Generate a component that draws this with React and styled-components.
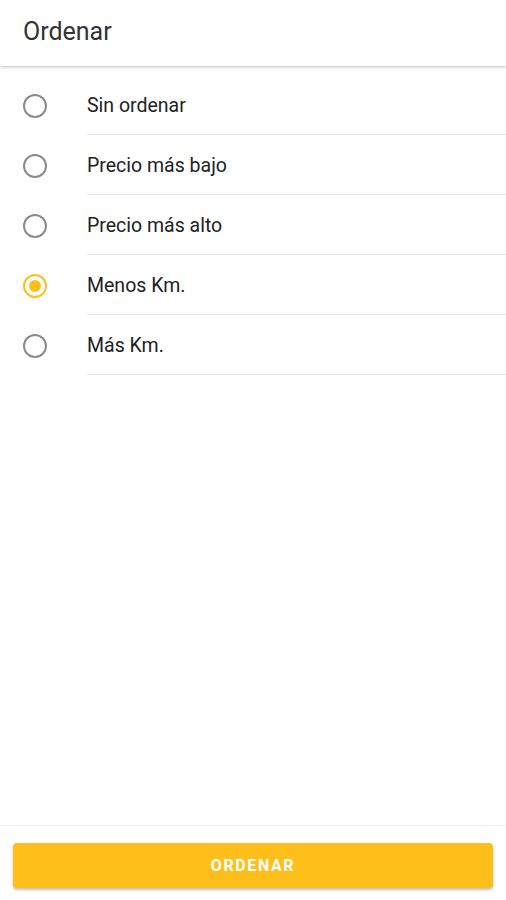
import React, { useState } from 'react';
import styled, { createGlobalStyle } from 'styled-components';

const GlobalStyle = createGlobalStyle`
  html, body {
    margin: 0;
    padding: 0;
    background: #ffffff;
    font-family: Roboto, "Liberation Sans", sans-serif;
  }
`;

const Screen = styled.div`
  display: flex;
  flex-direction: column;
  height: 900px;
  background: #fff;
`;

const Header = styled.header`
  height: 66px;
  display: flex;
  align-items: center;
  padding: 0 23px;
  box-shadow: 0 1px 3px rgba(0, 0, 0, 0.25);
  position: relative;
  z-index: 1;
`;

const Title = styled.h1`
  margin: 0;
  margin-top: -4px;
  font-size: 25px;
  font-weight: 400;
  color: #333;
`;

const List = styled.ul`
  list-style: none;
  margin: 0;
  padding: 9px 0 0;
  flex: 1;
`;

const Row = styled.li`
  display: flex;
  align-items: center;
  height: 60px;
  cursor: pointer;
`;

const RadioCell = styled.div`
  width: 87px;
  display: flex;
  padding-left: 23px;
  padding-top: 1px;
  box-sizing: border-box;
`;

const Radio = styled.span`
  width: 24px;
  height: 24px;
  box-sizing: border-box;
  border-radius: 50%;
  border: 2px solid ${(p) => (p.checked ? '#ffbf1a' : '#8a8a8a')};
  display: flex;
  align-items: center;
  justify-content: center;
  &::after {
    content: '';
    width: 12px;
    height: 12px;
    border-radius: 50%;
    background: #ffbf1a;
    display: ${(p) => (p.checked ? 'block' : 'none')};
  }
`;

const Label = styled.div`
  flex: 1;
  height: 100%;
  display: flex;
  align-items: center;
  border-bottom: 1px solid #e4e4e4;
  box-sizing: border-box;
  padding-top: 2px;
  font-size: 19.5px;
  color: #222;
`;

const Footer = styled.footer`
  border-top: 1px solid #eeeeee;
  padding: 17px 13px 12px;
`;

const Button = styled.button`
  width: 100%;
  height: 45px;
  border: none;
  border-radius: 4px;
  background: #ffbf1a;
  color: #fff;
  font-family: Roboto, "Liberation Sans", sans-serif;
  font-size: 16px;
  font-weight: 700;
  letter-spacing: 1.6px;
  box-shadow: 0 2px 3px rgba(0, 0, 0, 0.25);
  cursor: pointer;
`;

const options = ['Sin ordenar', 'Precio más bajo', 'Precio más alto', 'Menos Km.', 'Más Km.'];

export default function App() {
  const [selected, setSelected] = useState(3);
  return (
    <>
      <GlobalStyle />
      <Screen>
        <Header>
          <Title>Ordenar</Title>
        </Header>
        <List>
          {options.map((o, i) => (
            <Row key={o} onClick={() => setSelected(i)}>
              <RadioCell>
                <Radio checked={selected === i} />
              </RadioCell>
              <Label>{o}</Label>
            </Row>
          ))}
        </List>
        <Footer>
          <Button>ORDENAR</Button>
        </Footer>
      </Screen>
    </>
  );
}
